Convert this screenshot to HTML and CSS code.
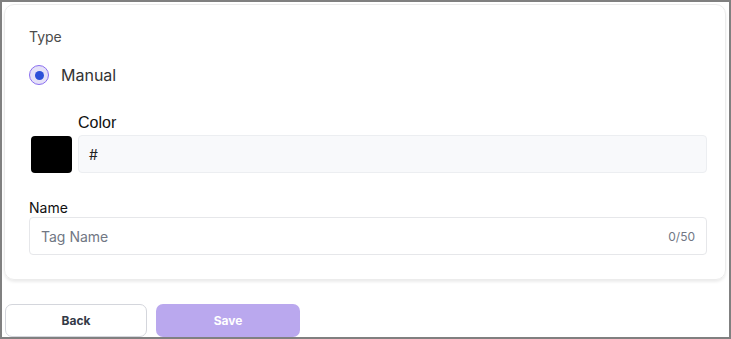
FILE: index.html
```html
<!DOCTYPE html>
<html>
<head>
<meta charset="utf-8">
<link rel="stylesheet" href="styles.css">
</head>
<body>
<div class="frame">
  <div class="card">
    <div class="type-label">Type</div>
    <div class="radio-row">
      <span class="radio"><span class="dot"></span></span>
      <span class="radio-text">Manual</span>
    </div>
    <div class="color-row">
      <div class="swatch"></div>
      <div class="color-col">
        <div class="color-label">Color</div>
        <div class="color-input">#</div>
      </div>
    </div>
    <div class="name-label">Name</div>
    <div class="name-input">
      <span class="placeholder">Tag Name</span>
      <span class="count">0/50</span>
    </div>
  </div>
  <div class="actions">
    <div class="btn btn-back">Back</div>
    <div class="btn btn-save">Save</div>
  </div>
</div>
</body>
</html>
```
FILE: styles.css
```css
* { box-sizing: border-box; }
html, body { margin: 0; padding: 0; background: #fff; }
body { font-family: Inter, "Noto Sans", sans-serif; }
.frame {
  width: 731px;
  height: 339px;
  border: 2px solid #808080;
  padding: 2px 3px 0 2px;
  overflow: hidden;
}
.card {
  border: 1px solid #ececec;
  border-radius: 10px;
  box-shadow: 0 2px 3px rgba(0,0,0,0.08);
  padding: 22px 18px 24px 24px;
}
.type-label {
  font-size: 14px;
  line-height: 20px;
  color: #4b4b4b;
}
.radio-row {
  margin-top: 18px;
  display: flex;
  align-items: center;
  gap: 12px;
  height: 20px;
}
.radio {
  width: 20px;
  height: 20px;
  border-radius: 50%;
  border: 1.5px solid #8a6ff0;
  background: #e5e1f8;
  display: flex;
  align-items: center;
  justify-content: center;
}
.dot {
  width: 9px;
  height: 9px;
  border-radius: 50%;
  background: #2c50d8;
}
.radio-text {
  font-size: 16px;
  color: #333;
}
.color-row {
  margin-top: 28px;
  display: flex;
  align-items: flex-end;
  gap: 6px;
}
.swatch {
  width: 41px;
  height: 37px;
  margin-left: 2px;
  background: #000;
  border-radius: 4px;
}
.color-col { flex: 1; }
.color-label {
  font-family: "Liberation Sans", Arial, sans-serif;
  font-size: 16px;
  line-height: 20px;
  color: #111;
  margin-bottom: 2px;
}
.color-input {
  height: 38px;
  background: #f8f9fb;
  border: 1px solid #eceef1;
  border-radius: 4px;
  padding-left: 10px;
  display: flex;
  align-items: center;
  font-size: 14px;
  color: #222;
}
.name-label {
  margin-top: 26px;
  font-size: 14px;
  line-height: 18px;
  color: #111;
}
.name-input {
  height: 38px;
  border: 1px solid #e6e7ea;
  border-radius: 4px;
  padding: 0 11px 0 11px;
  display: flex;
  align-items: center;
  justify-content: space-between;
}
.placeholder { font-size: 14px; color: #717784; }
.count { font-size: 12px; color: #717784; }
.actions {
  margin-top: 24px;
  display: flex;
  gap: 9px;
  padding-left: 1px;
}
.btn {
  width: 142px;
  height: 33px;
  border-radius: 7px;
  display: flex;
  align-items: center;
  justify-content: center;
  font-size: 12px;
  font-weight: 700;
}
.btn-back {
  border: 1px solid #d4d6dc;
  color: #333a47;
  background: #fff;
}
.btn-save {
  width: 144px;
  background: #baa8ee;
  color: #fff;
}
```
